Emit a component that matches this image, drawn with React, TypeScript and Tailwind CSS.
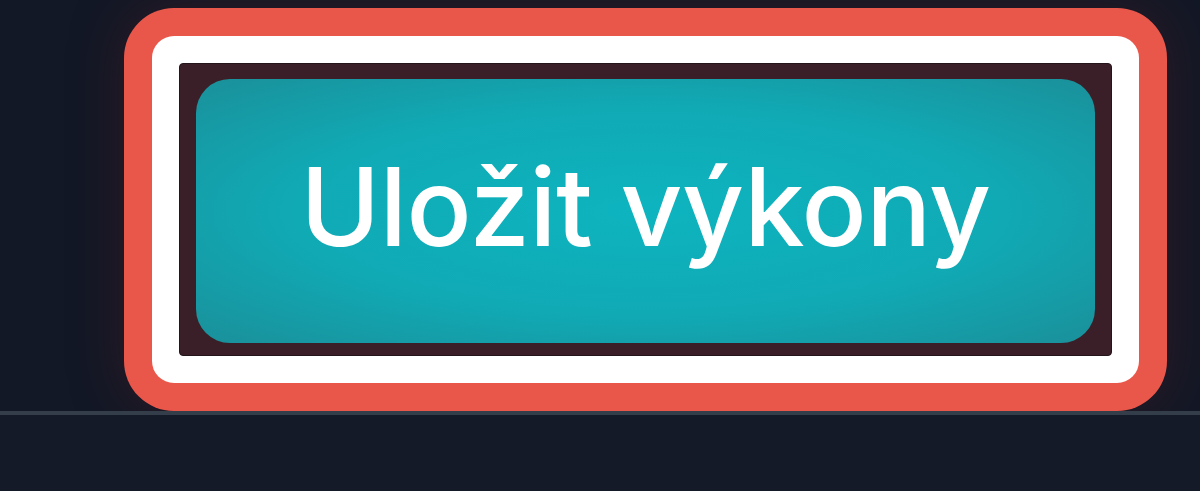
export default function App() {
  return (
    <div className="flex h-[491px] w-[1200px] flex-col overflow-hidden bg-[#131826]">
      {/* focused button area */}
      <div className="flex h-[411px] shrink-0 items-end pl-[124px]">
        <div className="rounded-[50px] bg-[#e9574b] p-[28px] shadow-[0_0_50px_rgba(70,25,35,0.55)]">
          <div className="rounded-[22px] bg-white p-[27px]">
            <div className="rounded-[4px] border-[1.5px] border-[#24141b] bg-[#3a1f28] px-[16px] pt-[15px] pb-[12px]">
              <button
                type="button"
                className="flex h-[264px] w-[899px] items-center justify-center rounded-[34px] bg-[radial-gradient(ellipse_at_center,#0db4bf_0%,#10aab5_55%,#1a909a_100%)] text-[108px] font-medium tracking-[-0.5px] text-white"
                style={{ fontFamily: "Inter, 'Noto Sans', sans-serif" }}
              >
                <span className="-mt-[8px]">Uložit výkony</span>
              </button>
            </div>
          </div>
        </div>
      </div>
      <div className="h-[4px] shrink-0 bg-[#343d4a]" />
      <div className="flex-1 bg-[#141a28]" />
    </div>
  )
}
